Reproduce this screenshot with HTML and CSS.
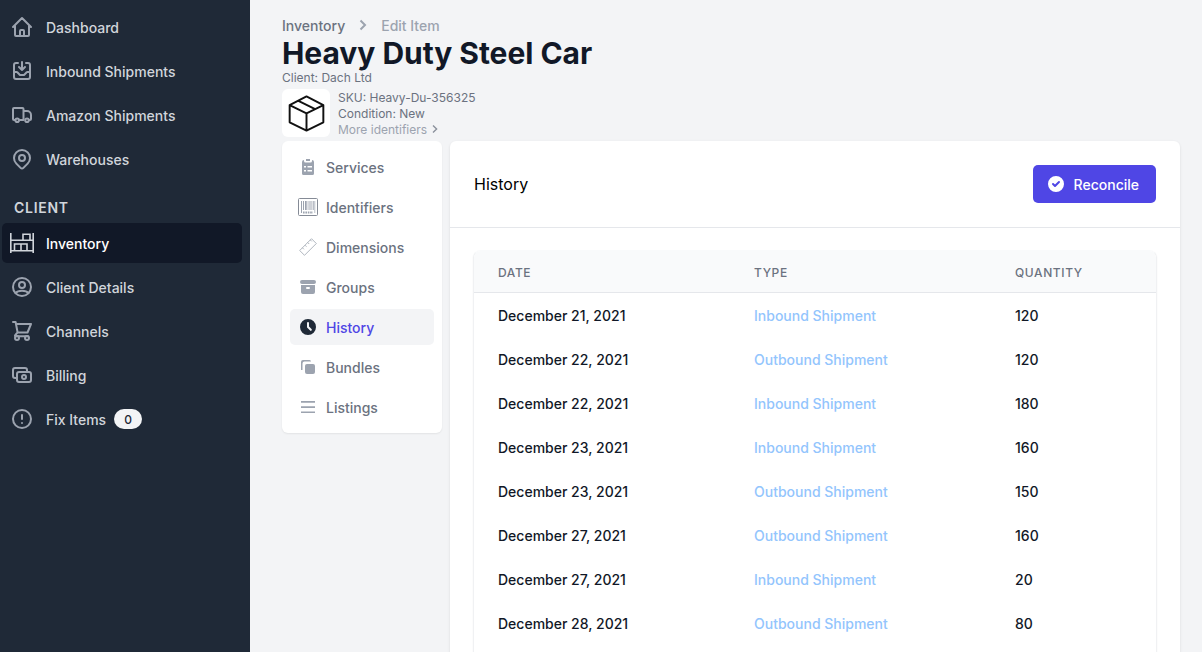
FILE: index.html
```html
<!DOCTYPE html>
<html lang="en">
<head>
<meta charset="utf-8">
<title>Heavy Duty Steel Car</title>
<link rel="stylesheet" href="styles.css">
</head>
<body>
<div class="app">
  <aside class="sidebar">
    <nav class="nav">
      <a class="nav-item"><svg class="icon" viewBox="0 0 24 24"><path d="M3 12l2-2m0 0l7-7 7 7M5 10v10a1 1 0 001 1h3m10-11l2 2m-2-2v10a1 1 0 01-1 1h-3m-6 0a1 1 0 001-1v-4a1 1 0 011-1h2a1 1 0 011 1v4a1 1 0 001 1m-6 0h6"/></svg>Dashboard</a>
      <a class="nav-item"><svg class="icon" viewBox="0 0 24 24"><path d="M8 4H6a2 2 0 00-2 2v12a2 2 0 002 2h12a2 2 0 002-2V6a2 2 0 00-2-2h-2m-4-1v8m0 0l3-3m-3 3L9 8m-5 5h2.586a1 1 0 01.707.293l2.414 2.414a1 1 0 00.707.293h3.172a1 1 0 00.707-.293l2.414-2.414a1 1 0 01.707-.293H20"/></svg>Inbound Shipments</a>
      <a class="nav-item"><svg class="icon" viewBox="0 0 24 24"><path d="M5 17H4a1 1 0 01-1-1V6a1 1 0 011-1h8.500a1 1 0 011 1v11H9M13.500 8H17a4 4 0 014 4v4a1 1 0 01-1 1h-1"/><circle cx="7.200" cy="17.300" r="1.800"/><circle cx="17" cy="17.300" r="1.800"/></svg>Amazon Shipments</a>
      <a class="nav-item"><svg class="icon" viewBox="0 0 24 24"><path d="M17.657 16.657L13.414 20.900a1.998 1.998 0 01-2.827 0l-4.244-4.243a8 8 0 1111.314 0z"/><path d="M15 11a3 3 0 11-6 0 3 3 0 016 0z"/></svg>Warehouses</a>
    </nav>
    <h2 class="nav-heading">CLIENT</h2>
    <nav class="nav">
      <a class="nav-item nav-active"><svg class="icon shelf" viewBox="0 0 24 24"><path d="M.8 2v20M23.200 2v20M1 9.300h22M1 19.800h22M13 9.300V3.200h7v6.100M4.500 19.800v-6.800H11v6.800M11 13h6v6.800"/></svg>Inventory</a>
      <a class="nav-item"><svg class="icon" viewBox="0 0 24 24"><circle cx="12" cy="12" r="9"/><circle cx="12" cy="10" r="3"/><path d="M5.500 18c1.500-1.700 4-2.200 6.500-2.200s5 .5 6.500 2.200"/></svg>Client Details</a>
      <a class="nav-item"><svg class="icon" viewBox="0 0 24 24"><path d="M3 3h2.600l2 10.500h9.900L21 5H6M7.500 13.500l-2.300 2.700c-.5.600-.2 1 .8 1h12"/><circle cx="7" cy="19" r="2"/><circle cx="17" cy="19" r="2"/></svg>Channels</a>
      <a class="nav-item"><svg class="icon" viewBox="0 0 24 24"><path d="M17 9V7a2 2 0 00-2-2H5a2 2 0 00-2 2v6a2 2 0 002 2h2m2 4h10a2 2 0 002-2v-6a2 2 0 00-2-2H9a2 2 0 00-2 2v6a2 2 0 002 2zm7-5a2 2 0 11-4 0 2 2 0 014 0z"/></svg>Billing</a>
      <a class="nav-item"><svg class="icon" viewBox="0 0 24 24"><path d="M12 8v4m0 4h.010M21 12a9 9 0 11-18 0 9 9 0 0118 0z"/></svg>Fix Items<span class="badge">0</span></a>
    </nav>
  </aside>
  <main class="main">
    <header class="header">
      <div class="crumbs"><span>Inventory</span><svg class="crumb-arrow" viewBox="0 0 8 12"><path d="M1.500 1.500L6 6l-4.500 4.500"/></svg><span class="crumb-current">Edit Item</span></div>
      <h1 class="title">Heavy Duty Steel Car</h1>
      <p class="client">Client: Dach Ltd</p>
      <div class="product">
        <div class="thumb"><svg class="box" viewBox="0 0 38 38"><path d="M19 1.500l17.300 9v17.500L19 36.500 1.700 28V10.500zM1.700 10.500L19 18.800l17.300-8.300M19 18.800v17.700M10.700 6l17.200 8.500"/></svg></div>
        <div class="meta">
          <span>SKU: Heavy-Du-356325</span>
          <span>Condition: New</span>
          <a class="more">More identifiers<svg class="more-arrow" viewBox="0 0 6 8"><path d="M1 .6L4.600 4 1 7.400"/></svg></a>
        </div>
      </div>
    </header>
    <div class="columns">
      <nav class="tabs">
        <a class="tab"><svg class="tab-icon" viewBox="0 0 20 20"><path fill-rule="evenodd" d="M4 5a2 2 0 012-2v1a1.500 1.500 0 001.500 1.500h5A1.500 1.500 0 0014 4V3a2 2 0 012 2v11.500a1.500 1.500 0 01-1.500 1.500h-9A1.500 1.500 0 014 16.500zM6 9v1.500h2V9zm3.500 0v1.500H14V9zM6 13v1.500h2V13zm3.500 0v1.500H14V13zM8 4V2h4v2z"/></svg>Services</a>
        <a class="tab"><svg class="tab-icon barcode" viewBox="0 0 20 18"><rect class="frame" x=".5" y=".5" width="19" height="17" rx="1"/><path d="M3 3h1v12H3zM5 3h1v9H5zM7 3h1.700v9H7zM9.700 3h.7v9h-.7zM11.500 3h1v9h-1zM13.500 3h.8v9h-.8zM15.100 3h.7v9h-.7zM16.500 3h.7v12h-.7z"/><path class="digits" d="M5 14.500h10"/></svg>Identifiers</a>
        <a class="tab"><svg class="tab-icon ruler" viewBox="0 0 20 20"><path d="M1.700 13.500L13.500 1.700l4.800 4.800L6.500 18.300zM4.400 10.800l1.500 1.500M7 8.200l1.500 1.500M9.700 5.500l1.500 1.500M12.300 2.900l1.500 1.500"/></svg>Dimensions</a>
        <a class="tab"><svg class="tab-icon" viewBox="0 0 20 20"><path fill-rule="evenodd" d="M4 3a2 2 0 100 4h12a2 2 0 100-4zM3 8h14v7a2 2 0 01-2 2H5a2 2 0 01-2-2zm5 3a1 1 0 011-1h2a1 1 0 110 2H9a1 1 0 01-1-1z"/></svg>Groups</a>
        <a class="tab tab-active"><svg class="tab-icon" viewBox="0 0 20 20"><path fill-rule="evenodd" d="M10 18a8 8 0 100-16 8 8 0 000 16zm1-12a1 1 0 10-2 0v4a1 1 0 00.293.707l2.828 2.829a1 1 0 101.415-1.415L11 9.586V6z"/></svg>History</a>
        <a class="tab"><svg class="tab-icon" viewBox="0 0 20 20"><rect x="7" y="7" width="10" height="10" rx="2"/><path d="M3 13V5a2 2 0 012-2h6.500A1.500 1.500 0 0113 4.500H6.500a2 2 0 00-2 2V13z"/></svg>Bundles</a>
        <a class="tab"><svg class="tab-icon" viewBox="0 0 20 20"><path d="M3 4h14v1.700H3zM3 9.200h14v1.700H3zM3 14.400h14v1.700H3z"/></svg>Listings</a>
      </nav>
      <section class="panel">
        <div class="panel-head">
          <h2 class="panel-title">History</h2>
          <button class="button"><svg class="check" viewBox="0 0 20 20"><path fill-rule="evenodd" d="M10 18a8 8 0 100-16 8 8 0 000 16zm3.707-9.293a1 1 0 00-1.414-1.414L9 10.586 7.707 9.293a1 1 0 00-1.414 1.414l2 2a1 1 0 001.414 0l4-4z"/></svg>Reconcile</button>
        </div>
        <div class="table-wrap">
          <table class="table">
            <thead><tr><th class="col-date">DATE</th><th class="col-type">TYPE</th><th>QUANTITY</th></tr></thead>
            <tbody>
              <tr><td>December 21, 2021</td><td class="type">Inbound Shipment</td><td>120</td></tr>
              <tr><td>December 22, 2021</td><td class="type">Outbound Shipment</td><td>120</td></tr>
              <tr><td>December 22, 2021</td><td class="type">Inbound Shipment</td><td>180</td></tr>
              <tr><td>December 23, 2021</td><td class="type">Inbound Shipment</td><td>160</td></tr>
              <tr><td>December 23, 2021</td><td class="type">Outbound Shipment</td><td>150</td></tr>
              <tr><td>December 27, 2021</td><td class="type">Outbound Shipment</td><td>160</td></tr>
              <tr><td>December 27, 2021</td><td class="type">Inbound Shipment</td><td>20</td></tr>
              <tr><td>December 28, 2021</td><td class="type">Outbound Shipment</td><td>80</td></tr>
            </tbody>
          </table>
        </div>
      </section>
    </div>
  </main>
</div>
</body>
</html>
```
FILE: styles.css
```css
* { box-sizing: border-box; }
body { margin: 0; font-family: Inter, "Liberation Sans", sans-serif; font-size: 14px; line-height: 20px; font-weight: 500; color: #111827; }
h1, h2, p { margin: 0; }
.app { display: flex; height: 652px; overflow: hidden; background: #f3f4f6; }

.sidebar { width: 250px; flex: none; padding: 7px 8px 0 2px; background: #1f2937; }
.nav { display: flex; flex-direction: column; gap: 4px; }
.nav-item { display: flex; align-items: center; height: 40px; padding: 2px 8px 0; border-radius: 5px; color: #d1d5db; }
.icon { width: 24px; height: 24px; margin: -2px 12px 0 0; flex: none; fill: none; stroke: #9ca3af; stroke-width: 2; stroke-linecap: round; stroke-linejoin: round; }
.nav-heading { padding: 19px 12px 5px; font-size: 14px; line-height: 20px; font-weight: 600; letter-spacing: .7px; color: #d1d5db; }
.nav-active { background: #111827; color: #fff; }
.shelf { stroke: #d1d5db; stroke-width: 1.6; stroke-linecap: butt; stroke-linejoin: miter; }
.badge { height: 20px; margin: -2px 0 0 8px; padding: 1px 10px 0; border-radius: 10px; background: #f3f4f6; color: #1f2937; font-size: 12px; line-height: 20px; }

.main { flex: 1; min-width: 0; padding: 16px 22px 0 32px; }
.header { height: 125px; }
.crumbs { display: flex; align-items: center; height: 20px; color: #6b7280; }
.crumb-arrow { width: 8px; height: 12px; margin: -2px 14px 0; fill: none; stroke: #9ca3af; stroke-width: 2; }
.crumb-current { color: #9ca3af; }
.title { font-size: 30px; line-height: 34px; font-weight: 700; letter-spacing: -.04px; }
.client { margin-bottom: 4px; font-size: 12px; line-height: 15px; font-weight: 400; color: #6b7280; }
.product { display: flex; gap: 8px; }
.thumb { display: flex; align-items: center; justify-content: center; width: 48px; height: 48px; border-radius: 6px; background: #fff; }
.box { width: 37px; height: 37px; fill: none; stroke: #111; stroke-width: 2; stroke-linejoin: round; }
.meta { display: flex; flex-direction: column; padding-top: 1px; font-size: 12px; line-height: 16px; font-weight: 400; color: #6b7280; }
.more { display: flex; align-items: center; color: #9ca3af; }
.more-arrow { width: 6px; height: 8px; margin: -2px 0 0 5px; fill: none; stroke: #8b919c; stroke-width: 1.4; }

.columns { display: flex; align-items: flex-start; gap: 8px; }
.tabs { display: flex; flex-direction: column; gap: 4px; width: 160px; flex: none; padding: 8px; border-radius: 6px; background: #fff; box-shadow: 0 1px 2px rgba(0, 0, 0, .07); }
.tab { display: flex; align-items: center; height: 36px; padding: 1px 8px 0; border-radius: 5px; color: #6b7280; }
.tab-active { background: #f3f4f6; color: #4f46e5; }
.tab-icon { width: 20px; height: 20px; margin: -2px 8px 0 0; flex: none; fill: #9ca3af; }
.tab-active .tab-icon { fill: #1f2937; }
.barcode { height: 18px; fill: #9ca3af; }
.frame { fill: none; stroke: #858b96; }
.digits { stroke: #9ca3af; stroke-width: 2; stroke-dasharray: 1.6 .8; }
.ruler { fill: none; stroke: #9ca3af; stroke-width: .8; }

.panel { flex: 1; min-width: 0; height: 620px; border-radius: 6px; background: #fff; box-shadow: 0 1px 3px rgba(0, 0, 0, .1); }
.panel-head { display: flex; align-items: center; justify-content: space-between; height: 87px; padding: 0 24px; border-bottom: 1px solid #e5e7eb; }
.panel-title { font-size: 16px; line-height: 24px; font-weight: 400; color: #000; }
.button { display: flex; align-items: center; height: 38px; padding: 1px 17px 0 13px; border: 0; border-radius: 5px; background: #4f46e5; color: #fff; font: 500 14px/20px Inter, "Liberation Sans", sans-serif; }
.check { width: 20px; height: 20px; margin: -2px 8px 0 0; fill: #fff; }
.table-wrap { margin: 22px 23px 0; overflow: hidden; height: 500px; border: 1px solid #f0f1f3; border-top-color: #f9fafb; border-radius: 8px; box-shadow: 0 1px 2px rgba(0, 0, 0, .06); }
.table { width: 100%; border-collapse: collapse; table-layout: fixed; }
th { height: 41px; padding: 4px 24px 0; background: #f9fafb; border-bottom: 1px solid #e5e7eb; text-align: left; font-size: 12px; line-height: 16px; font-weight: 500; letter-spacing: .6px; color: #6b7280; }
td { height: 44px; padding: 4px 24px 0; font-size: 14px; line-height: 20px; }
.col-date { width: 256px; }
.col-type { width: 261px; }
.type { color: #93c5fd; }
```
